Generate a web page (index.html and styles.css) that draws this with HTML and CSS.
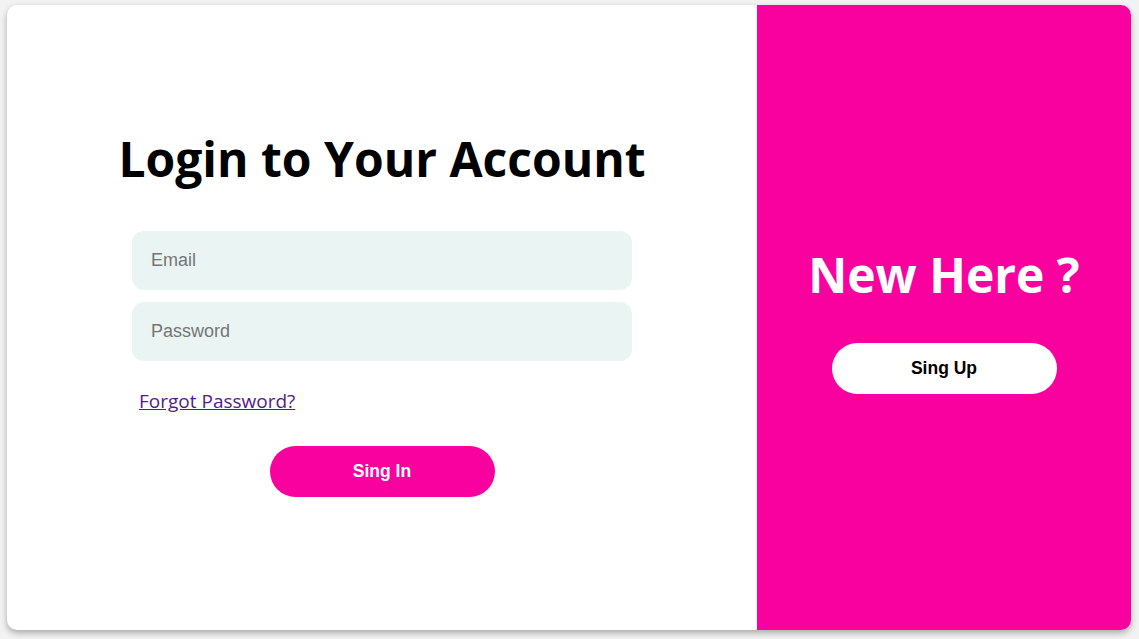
FILE: index.html
```html
<!DOCTYPE html>
<html>
<head>
<meta charset="utf-8">
<link rel="stylesheet" href="styles.css">
</head>
<body>
<div class="card">
  <div class="login">
    <h1 class="title">Login to Your Account</h1>
    <form class="form">
      <input class="field" type="email" placeholder="Email">
      <input class="field" type="password" placeholder="Password">
      <a class="forgot" href="#">Forgot Password?</a>
      <button class="btn btn-pink" type="button">Sing In</button>
    </form>
  </div>
  <div class="signup">
    <h2 class="title title-white">New Here ?</h2>
    <button class="btn btn-white" type="button">Sing Up</button>
  </div>
</div>
</body>
</html>
```
FILE: styles.css
```css
html, body {
  margin: 0;
  height: 100%;
}
body {
  background: #f2f2f2;
  padding: 5px 8px 9px 7px;
  box-sizing: border-box;
}
.card {
  display: flex;
  height: 100%;
  border-radius: 10px;
  overflow: hidden;
  background: #fff;
  box-shadow: 0 3px 6px rgba(0, 0, 0, 0.3);
}
.login {
  flex: 1;
  display: flex;
  flex-direction: column;
  align-items: center;
  justify-content: center;
  padding-bottom: 10px;
}
.signup {
  width: 374px;
  flex: none;
  background: #f8019f;
  display: flex;
  flex-direction: column;
  align-items: center;
  justify-content: center;
  padding-top: 3px;
}
.title {
  font-family: "Open Sans", sans-serif;
  font-weight: 700;
  font-size: 48px;
  line-height: 60px;
  margin: 0 0 42px;
  color: #000;
}
.title-white {
  color: #fff;
  margin-bottom: 38px;
}
.form {
  width: 500px;
  display: flex;
  flex-direction: column;
  align-items: center;
}
.field {
  width: 100%;
  height: 59px;
  box-sizing: border-box;
  border: none;
  outline: none;
  border-radius: 12px;
  background: #eaf4f3;
  padding: 0 19px;
  margin-bottom: 12px;
  font-family: "Liberation Sans", Arial, sans-serif;
  font-size: 18px;
}
.field::placeholder {
  color: #757575;
}
.forgot {
  align-self: flex-start;
  margin: 15px 0 32px 7px;
  font-family: "Open Sans", sans-serif;
  font-size: 19px;
  color: #551a8b;
}
.btn {
  width: 225px;
  height: 51px;
  border: none;
  border-radius: 26px;
  font-family: "Liberation Sans", Arial, sans-serif;
  font-weight: 700;
  font-size: 17.5px;
}
.btn-pink {
  background: #f8019f;
  color: #fff;
}
.btn-white {
  background: #fff;
  color: #000;
}
```
